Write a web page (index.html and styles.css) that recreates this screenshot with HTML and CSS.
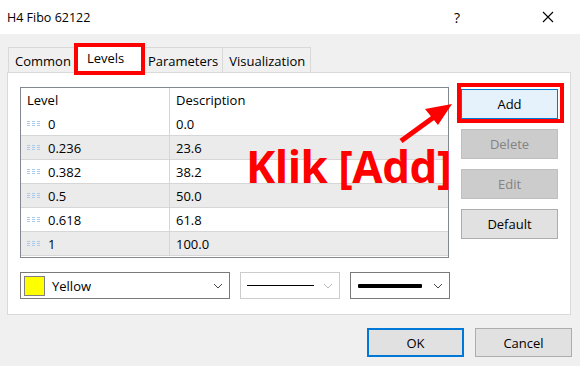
FILE: index.html
```html
<!DOCTYPE html>
<html lang="en">
<head>
  <meta charset="UTF-8">
  <title>H4 Fibo 62122</title>
  <link rel="stylesheet" href="styles.css">
</head>
<body>
<div class="window">
  <!-- Title bar -->
  <div class="titlebar">
    <span class="title">H4 Fibo 62122</span>
    <span class="help">?</span>
    <span class="close">
      <svg width="12" height="12" viewBox="0 0 12 12"><path d="M1 1L11 11M11 1L1 11" stroke="#000" stroke-width="1.1" fill="none"/></svg>
    </span>
  </div>

  <!-- Tabs -->
  <div class="tabs">
    <div class="tab">Common</div>
    <div class="tab selected">Levels</div>
    <div class="tab">Parameters</div>
    <div class="tab">Visualization</div>
  </div>

  <!-- Levels panel -->
  <div class="panel">
    <div class="panel-top">
      <div class="grid">
        <div class="row head">
          <div class="cell level">Level</div>
          <div class="cell desc">Description</div>
        </div>
        <div class="rows" id="rows"></div>
      </div>
      <div class="side-buttons">
        <button class="btn active">Add</button>
        <button class="btn disabled">Delete</button>
        <button class="btn disabled">Edit</button>
        <button class="btn">Default</button>
      </div>
    </div>

    <div class="combos">
      <div class="combo color">
        <span class="swatch"></span>
        <span class="combo-text">Yellow</span>
        <svg class="chev" width="10" height="6" viewBox="0 0 10 6"><path d="M1 1L5 5L9 1" stroke="#444" fill="none"/></svg>
      </div>
      <div class="combo style disabled">
        <span class="line thin"></span>
        <svg class="chev" width="10" height="6" viewBox="0 0 10 6"><path d="M1 1L5 5L9 1" stroke="#bbb" fill="none"/></svg>
      </div>
      <div class="combo width">
        <span class="line thick"></span>
        <svg class="chev" width="10" height="6" viewBox="0 0 10 6"><path d="M1 1L5 5L9 1" stroke="#444" fill="none"/></svg>
      </div>
    </div>
  </div>

  <!-- Dialog buttons -->
  <div class="footer">
    <button class="btn default">OK</button>
    <button class="btn">Cancel</button>
  </div>

  <!-- Annotations drawn over the dialog -->
  <div class="mark mark-tab"></div>
  <div class="mark mark-add"></div>
  <div class="note">Klik [Add]</div>
  <svg class="arrow" width="70" height="60" viewBox="0 0 70 60">
    <path d="M5 53L38 29" stroke="#ff0000" stroke-width="5" fill="none"/>
    <polygon points="56,16 29,21 42,37" fill="#ff0000"/>
  </svg>
</div>

<script>
  const levels = [
    ['0', '0.0'],
    ['0.236', '23.6'],
    ['0.382', '38.2'],
    ['0.5', '50.0'],
    ['0.618', '61.8'],
    ['1', '100.0']
  ];

  const dots = `<svg class="dots" width="15" height="5" viewBox="0 0 15 5">
    <g fill="#a8cbeb">
      <rect x="0" y="0" width="3" height="1"/><rect x="5" y="0" width="3" height="1"/><rect x="10" y="0" width="3" height="1"/>
      <rect x="0" y="2" width="3" height="1"/><rect x="5" y="2" width="3" height="1"/><rect x="10" y="2" width="3" height="1"/>
      <rect x="0" y="4" width="3" height="1"/><rect x="5" y="4" width="3" height="1"/><rect x="10" y="4" width="3" height="1"/>
    </g></svg>`;

  document.getElementById('rows').innerHTML = levels.map((l, i) => `
    <div class="row${i % 2 ? ' alt' : ''}">
      <div class="cell level">${dots}<span>${l[0]}</span></div>
      <div class="cell desc">${l[1]}</div>
    </div>
  `).join('');
</script>
</body>
</html>
```

FILE: styles.css
```css
* {
  margin: 0;
  padding: 0;
  box-sizing: border-box;
}

body {
  font-family: "Open Sans", "Noto Sans", sans-serif;
  font-size: 13px;
  color: #000;
  background-color: #f0f0f0;
}

.window {
  position: relative;
  width: 580px;
  height: 366px;
  background-color: #f0f0f0;
  overflow: hidden;
}

/* Title bar */
.titlebar {
  height: 34px;
  background-color: #fff;
  display: flex;
  align-items: center;
  padding-left: 7px;
}

.title {
  font-size: 12.5px;
  flex: 1;
}

.help {
  font-size: 14px;
  width: 50px;
}

.close {
  width: 50px;
  display: flex;
  margin-right: 26px;
  justify-content: flex-end;
}

/* Tabs */
.tabs {
  display: flex;
  align-items: flex-end;
  height: 38px;
  padding-left: 8px;
  position: relative;
  z-index: 1;
}

.tab {
  height: 25px;
  padding: 0 5px 0 6px;
  border: 1px solid #d9d9d9;
  border-bottom: none;
  border-right: none;
  display: flex;
  align-items: center;
  padding-top: 2px;
}

.tab:last-child {
  border-right: 1px solid #d9d9d9;
}

.tab.selected {
  height: 28px;
  background-color: #fff;
  width: 70px;
  padding-left: 11px;
  padding-top: 0;
  padding-bottom: 4px;
  margin-bottom: -1px;
  margin-left: -1px;
  border-right: 1px solid #d9d9d9;
}

.tab.selected + .tab {
  border-left: none;
  padding-left: 3px;
  padding-right: 4px;
}

/* Panel */
.panel {
  margin: 0 9px 0 7px;
  height: 243px;
  background-color: #fff;
  border: 1px solid #d9d9d9;
  padding: 14px 12px 0 12px;
}

.panel-top {
  display: flex;
  gap: 12px;
}

.grid {
  width: 429px;
  height: 171px;
  border: 1px solid #828790;
}

.row {
  display: flex;
  height: 24px;
  border-bottom: 1px solid #d6d6d6;
}

.row.head {
  border-bottom: none;
}

.row.alt {
  background-color: #ebebeb;
}

.cell {
  display: flex;
  align-items: center;
}

.cell.level {
  width: 149px;
  padding-left: 6px;
  border-right: 1px solid #d6d6d6;
}

.cell.desc {
  flex: 1;
  padding-left: 6px;
}

.dots {
  margin-right: 6px;
}

/* Side buttons */
.side-buttons {
  display: flex;
  flex-direction: column;
  gap: 10px;
  padding-top: 2px;
}

.btn {
  font-family: inherit;
  font-size: 13px;
  width: 97px;
  height: 30px;
  background-color: #e1e1e1;
  border: 1px solid #adadad;
  color: #000;
}

.btn.active {
  background-color: #e5f1fb;
  border-color: #0078d7;
}

.btn.disabled {
  background-color: #cccccc;
  border-color: #bfbfbf;
  color: #838383;
}

/* Combos */
.combos {
  display: flex;
  gap: 10px;
  margin-top: 14px;
}

.combo {
  height: 27px;
  border: 1px solid #7a7a7a;
  background-color: #fff;
  display: flex;
  align-items: center;
  padding: 0 6px 0 3px;
}

.combo.color {
  width: 210px;
}

.combo.style,
.combo.width {
  width: 100px;
  padding-left: 6px;
}

.combo.disabled {
  border-color: #cccccc;
}

.swatch {
  width: 21px;
  height: 20px;
  background-color: #ffff00;
  border: 1px solid #808080;
  margin-right: 7px;
}

.combo-text {
  flex: 1;
}

.line {
  flex: 1;
  background-color: #000;
  margin-right: 9px;
}

.line.thin {
  height: 1px;
}

.line.thick {
  height: 4px;
  margin-left: 1px;
  margin-right: 11px;
  border-radius: 1px;
}

.chev {
  flex: none;
}

/* Footer */
.footer {
  display: flex;
  justify-content: flex-end;
  gap: 11px;
  padding: 13px 8px 0 0;
}

.footer .btn {
  height: 29px;
}

.btn.default {
  border: 2px solid #0078d7;
}

/* Annotations */
.mark {
  position: absolute;
  border: 4px solid #ff0000;
  z-index: 2;
}

.mark-tab {
  left: 74px;
  top: 43px;
  width: 71px;
  height: 32px;
}

.mark-add {
  left: 457px;
  top: 83px;
  width: 107px;
  height: 40px;
}

.note {
  position: absolute;
  left: 246px;
  top: 136px;
  font-size: 44px;
  font-weight: bold;
  color: #ff0000;
  letter-spacing: -0.5px;
  z-index: 2;
}

.arrow {
  position: absolute;
  left: 396px;
  top: 88px;
  z-index: 2;
}
```
